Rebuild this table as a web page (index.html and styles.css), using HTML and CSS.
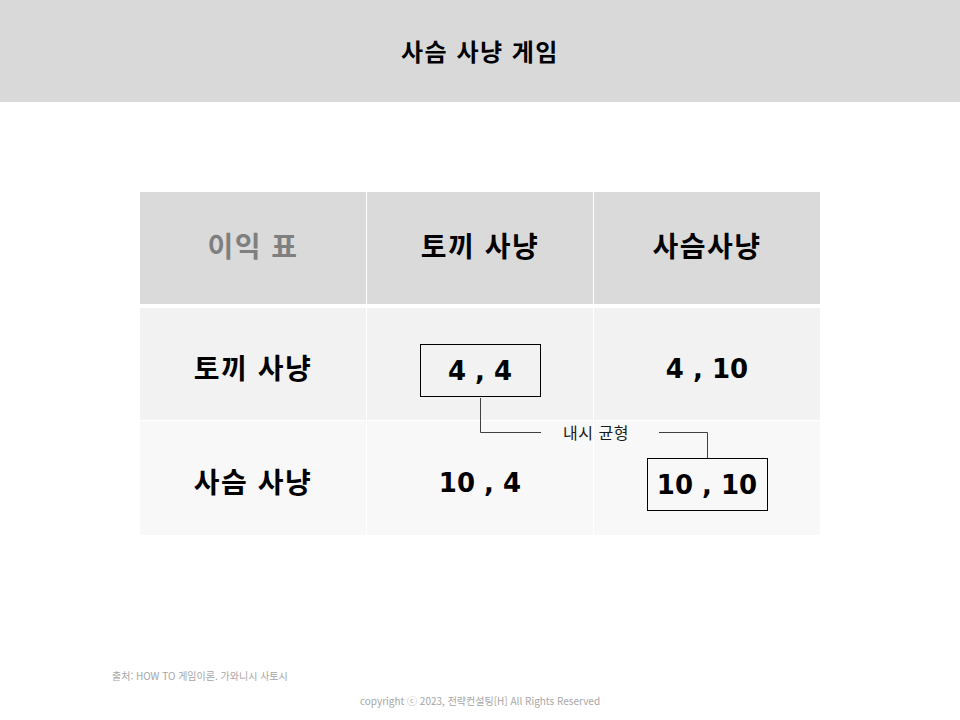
FILE: index.html
```html
<!DOCTYPE html>
<html lang="ko">
<head>
<meta charset="utf-8">
<title>사슴 사냥 게임</title>
<link rel="stylesheet" href="styles.css">
</head>
<body>
<header class="topbar"><h1 class="title">사슴 사냥 게임</h1></header>
<main class="content">
  <div class="payoff">
    <div class="row head">
      <div class="cell corner">이익 표</div>
      <div class="cell">토끼 사냥</div>
      <div class="cell">사슴사냥</div>
    </div>
    <div class="row body r1">
      <div class="cell label">토끼 사냥</div>
      <div class="cell num"><span class="box">4 , 4</span></div>
      <div class="cell num">4 , 10</div>
    </div>
    <div class="row body r2">
      <div class="cell label">사슴 사냥</div>
      <div class="cell num">10 , 4</div>
      <div class="cell num"><span class="box">10 , 10</span></div>
    </div>
    <svg class="connector" width="680" height="343" viewBox="0 0 680 343">
      <polyline points="340.5,206 340.5,240.5 401,240.5" fill="none" stroke="#404040" stroke-width="1"/>
      <polyline points="519,240.5 567.5,240.5 567.5,266" fill="none" stroke="#404040" stroke-width="1"/>
    </svg>
    <div class="nash">내시 균형</div>
  </div>
  <p class="source">출처: HOW TO 게임이론. 가와니시 사토시</p>
  <p class="copy">copyright ⓒ 2023, 전략컨설팅[H] All Rights Reserved</p>
</main>
</body>
</html>
```
FILE: styles.css
```css
html, body {
  margin: 0;
  padding: 0;
  background: #ffffff;
}
body {
  width: 960px;
  height: 720px;
  overflow: hidden;
  font-family: "Noto Sans CJK KR", "Noto Sans", sans-serif;
}
.topbar {
  height: 102px;
  background: #d9d9d9;
  display: flex;
  align-items: center;
  justify-content: center;
}
.title {
  margin: 0;
  font-size: 24px;
  font-weight: 700;
  color: #000;
  line-height: 1;
  letter-spacing: 1.5px;
}
.content {
  padding-top: 90px;
}
.payoff {
  position: relative;
  margin-left: 140px;
  width: 680px;
  display: flex;
  flex-direction: column;
  gap: 1px;
}
.row {
  display: grid;
  grid-template-columns: 226px 226px 226px;
  column-gap: 1px;
}
.row.head {
  height: 112px;
  margin-bottom: 3px;
}
.row.head .cell {
  background: #dadada;
  padding-bottom: 6px;
  box-sizing: border-box;
}
.row.r1 { height: 112px; }
.row.r2 { height: 114px; }
.row.r1 .cell { background: #f2f2f2; }
.row.r2 .cell { background: #f8f8f8; }
.cell {
  display: flex;
  align-items: center;
  justify-content: center;
  font-size: 28px;
  font-weight: 700;
  color: #000;
  letter-spacing: 1.5px;
}
.cell.corner {
  color: #7f7f7f;
}
.row.body .cell {
  padding-top: 6px;
  box-sizing: border-box;
}
.num {
  font-family: "DejaVu Sans", "Noto Sans", sans-serif;
  font-size: 26px;
  letter-spacing: 0;
}
.row.body .num {
  padding-top: 10px;
}
.box {
  box-sizing: border-box;
  width: 121px;
  height: 53px;
  border: 1px solid #000;
  display: flex;
  align-items: center;
  justify-content: center;
  margin-top: 3px;
}
.connector {
  position: absolute;
  left: 0;
  top: 0;
  pointer-events: none;
}
.nash {
  position: absolute;
  left: 423px;
  top: 230px;
  font-size: 16px;
  line-height: 20px;
  letter-spacing: 0.5px;
  color: #1a1a1a;
  font-weight: 400;
}
.source {
  margin: 135px 0 0 112px;
  font-size: 10px;
  line-height: 12px;
  color: #a6a6a6;
}
.copy {
  margin: 13px 0 0 0;
  text-align: center;
  font-size: 10px;
  line-height: 12px;
  color: #a6a6a6;
}
```
